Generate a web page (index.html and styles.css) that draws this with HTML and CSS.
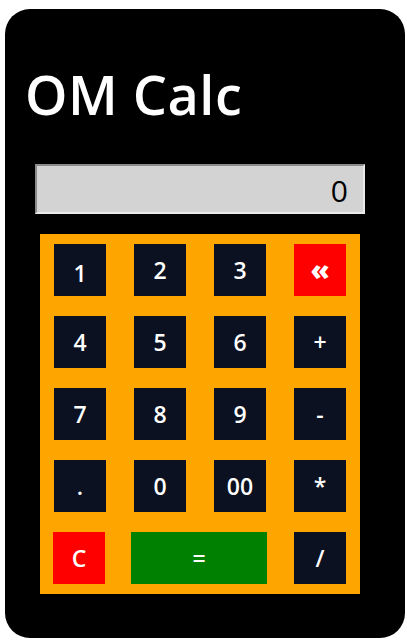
FILE: index.html
```html
<!DOCTYPE html>
<html lang="en">
<head>
<meta charset="utf-8">
<title>OM Calc</title>
<link rel="stylesheet" href="styles.css">
</head>
<body>
<div class="calc">
  <div class="title">OM Calc</div>
  <div class="display">0</div>
  <div class="keypad">
    <button class="key key-first">1</button>
    <button class="key">2</button>
    <button class="key">3</button>
    <button class="key key-red key-back">«</button>
    <button class="key">4</button>
    <button class="key">5</button>
    <button class="key">6</button>
    <button class="key">+</button>
    <button class="key">7</button>
    <button class="key">8</button>
    <button class="key">9</button>
    <button class="key">-</button>
    <button class="key">.</button>
    <button class="key">0</button>
    <button class="key">00</button>
    <button class="key">*</button>
    <button class="key key-red key-clear">C</button>
    <button class="key key-equals">=</button>
    <button class="key">/</button>
  </div>
</div>
</body>
</html>
```
FILE: styles.css
```css
html, body {
  margin: 0;
  padding: 0;
  background: #ffffff;
}

body {
  font-family: "Open Sans", "Noto Sans", sans-serif;
}

.calc {
  width: 400px;
  height: 629px;
  margin: 9px 0 0 5px;
  background: #000000;
  border-radius: 25px;
  display: flex;
  flex-direction: column;
  box-sizing: border-box;
}

.title {
  margin: 55px 0 0 20px;
  height: 60px;
  line-height: 60px;
  font-size: 54px;
  font-weight: 600;
  letter-spacing: 0.5px;
  color: #ffffff;
}

.display {
  margin: 40px 0 0 30px;
  width: 330px;
  height: 50px;
  box-sizing: border-box;
  background: #d3d3d3;
  border-style: solid;
  border-width: 2px;
  border-color: #8a8a8a #e9e9e9 #e9e9e9 #8a8a8a;
  padding: 0 15px 0 0;
  text-align: right;
  font-size: 30px;
  line-height: 50px;
  color: #000000;
}

.keypad {
  margin: 20px 0 0 35px;
  width: 320px;
  height: 360px;
  box-sizing: border-box;
  padding: 10px 14px;
  background: #ffa500;
  display: grid;
  grid-template-columns: repeat(4, 52px);
  grid-auto-rows: 52px;
  column-gap: 28px;
  row-gap: 20px;
}

.key {
  margin: 0;
  padding: 0;
  border: none;
  background: #0b1120;
  color: #ffffff;
  font-family: "Open Sans", "Noto Sans", sans-serif;
  font-size: 23px;
  font-weight: 600;
  line-height: 1;
}

.key-first {
  padding-top: 7px;
}

.key-red {
  background: #ff0000;
}

.key-back {
  font-size: 28px;
  font-weight: 800;
  padding-bottom: 3px;
}

.key-clear {
  margin-left: -1px;
  margin-right: 1px;
}

.key-equals {
  grid-column: 2 / span 2;
  background: #008000;
  margin-left: -3px;
  margin-right: -1px;
}
```
